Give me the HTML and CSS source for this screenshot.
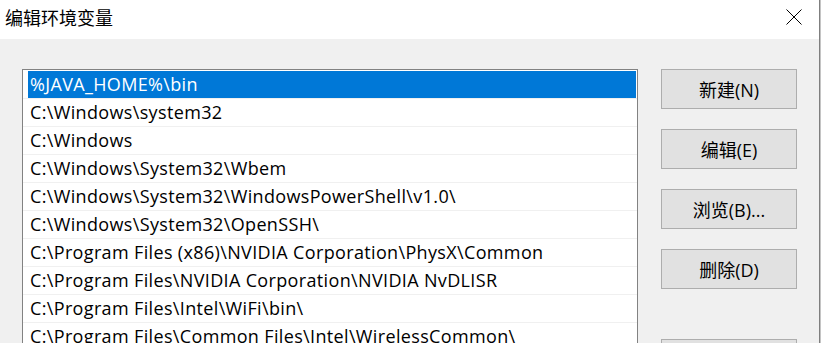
FILE: index.html
```html
<!DOCTYPE html>
<html lang="zh-CN">
<head>
    <meta charset="UTF-8">
    <meta name="viewport" content="width=device-width, initial-scale=1.0">
    <title>编辑环境变量</title>
    <link rel="stylesheet" href="styles.css">
</head>
<body>
    <div class="dialog">
        <div class="title-bar">
            <span class="title">编辑环境变量</span>
            <button class="close-button" aria-label="关闭">
                <svg width="16" height="16" viewBox="0 0 16 16">
                    <path d="M0.5 0.5 L15.5 15.5 M15.5 0.5 L0.5 15.5" stroke="#000" stroke-width="1" fill="none"/>
                </svg>
            </button>
        </div>

        <div class="content">
            <!-- Path list -->
            <ul class="path-list">
                <li class="path-item selected"><span>%JAVA_HOME%\bin</span></li>
                <li class="path-item"><span>C:\Windows\system32</span></li>
                <li class="path-item"><span>C:\Windows</span></li>
                <li class="path-item"><span>C:\Windows\System32\Wbem</span></li>
                <li class="path-item"><span>C:\Windows\System32\WindowsPowerShell\v1.0\</span></li>
                <li class="path-item"><span>C:\Windows\System32\OpenSSH\</span></li>
                <li class="path-item"><span>C:\Program Files (x86)\NVIDIA Corporation\PhysX\Common</span></li>
                <li class="path-item"><span>C:\Program Files\NVIDIA Corporation\NVIDIA NvDLISR</span></li>
                <li class="path-item"><span>C:\Program Files\Intel\WiFi\bin\</span></li>
                <li class="path-item"><span>C:\Program Files\Common Files\Intel\WirelessCommon\</span></li>
            </ul>

            <!-- Action buttons -->
            <div class="actions">
                <button class="action-button">新建(N)</button>
                <button class="action-button">编辑(E)</button>
                <button class="action-button">浏览(B)...</button>
                <button class="action-button">删除(D)</button>
                <button class="action-button spaced">上移(U)</button>
            </div>
        </div>
    </div>
</body>
</html>
```

FILE: styles.css
```css
body {
    margin: 0;
    width: 821px;
    height: 343px;
    overflow: hidden;
    font-family: "Open Sans", "Noto Sans CJK SC", sans-serif;
    color: #000;
}

.dialog {
    width: 819px;
    height: 343px;
    overflow: hidden;
    background: #f0f0f0;
    border-right: 1px solid #7f7f7f;
    box-shadow: 1px 0 0 #c4c4c4;
}

.title-bar {
    height: 39px;
    background: #fff;
    display: flex;
    justify-content: space-between;
    align-items: center;
}

.title {
    padding-left: 5px;
    font-family: "Noto Sans CJK SC", sans-serif;
    font-size: 18px;
    margin-top: -6px;
}

.close-button {
    width: 16px;
    height: 16px;
    padding: 0;
    margin: -6px 17px 0 0;
    border: none;
    background: none;
    display: flex;
}

.content {
    display: flex;
    align-items: flex-start;
    padding: 30px 0 0 22px;
}

.path-list {
    width: 614px;
    height: 300px;
    margin: 0;
    padding: 1px 0 0 0;
    list-style: none;
    background: #fff;
    border: 1px solid #828282;
    font-size: 18px;
    letter-spacing: 0.35px;
}

.path-item {
    height: 27px;
    border-bottom: 1px solid #f0f0f0;
    display: flex;
}

.path-item span {
    flex: 1;
    margin: 0 1px 0 5px;
    padding-left: 2px;
    line-height: 27px;
    white-space: nowrap;
}

.path-item.selected span {
    background: #0078d7;
    color: #fff;
}

.actions {
    display: flex;
    flex-direction: column;
    gap: 20px;
    margin-left: 23px;
}

.action-button {
    width: 136px;
    height: 40px;
    padding: 0;
    background: #e1e1e1;
    border: 1px solid #adadad;
    font-family: "Open Sans", "Noto Sans CJK SC", sans-serif;
    font-size: 18px;
    color: #000;
}

.action-button.spaced {
    margin-top: 30px;
}
```
